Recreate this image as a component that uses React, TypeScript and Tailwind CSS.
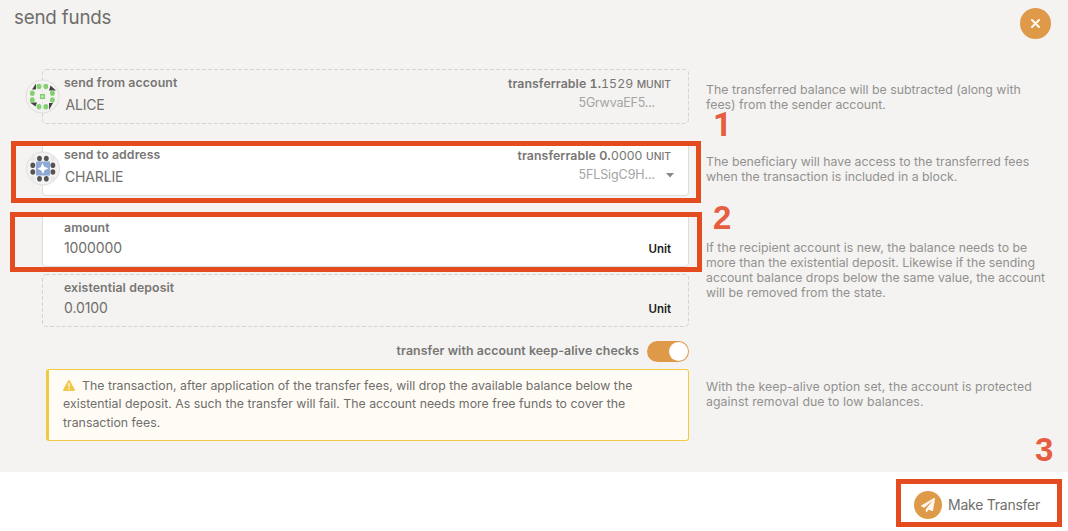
import type { ReactNode } from "react";

function Help({ children, className = "" }: { children: ReactNode; className?: string }) {
  return (
    <p className={`w-[350px] shrink-0 whitespace-pre text-[12.3px] leading-[15px] tracking-[0.01px] text-[#92918f] ${className}`}>
      {children}
    </p>
  );
}

function Callout({ n, className }: { n: string; className: string }) {
  return (
    <span className={`absolute font-bold text-[#e65d41] ${className}`}>{n}</span>
  );
}

function AliceIcon() {
  return (
    <svg className="absolute -left-[17px] top-[10px]" width="35" height="35" viewBox="0 0 35 35">
      <circle cx="17.5" cy="17.5" r="16.5" fill="#f4f3f1" fillOpacity="0.6" stroke="#dededd" />
      <path d="M11 4.500V10.500H7zM31 11.500h-7l1.500-5zM5 23.500h7l-1.500 4zM24 31v-7h4z" fill="#424242" />
      <g fill="#84cf72">
        <ellipse cx="14" cy="7.500" rx="2.400" ry="2.700" /><ellipse cx="20.800" cy="7.500" rx="2.400" ry="2.700" />
        <ellipse cx="7.300" cy="14.300" rx="2.400" ry="2.700" /><ellipse cx="27.400" cy="14.300" rx="2.400" ry="2.700" />
        <ellipse cx="7.300" cy="21" rx="2.400" ry="2.700" /><ellipse cx="27.400" cy="21" rx="2.400" ry="2.700" />
        <ellipse cx="14" cy="27.700" rx="2.400" ry="2.700" /><ellipse cx="20.800" cy="27.700" rx="2.400" ry="2.700" />
      </g>
      <rect x="15.700" y="15.700" width="3.600" height="3.600" fill="#d4edce" stroke="#84cf72" strokeWidth="1.500" />
    </svg>
  );
}

function CharlieIcon() {
  return (
    <svg className="absolute -left-[17px] top-[9px]" width="35" height="35" viewBox="0 0 35 35">
      <circle cx="17" cy="17.500" r="16.500" fill="#f4f3f1" stroke="#dededd" />
      <g transform="translate(-0.500 0)">
        <g fill="#e9e9e9">
          <circle cx="7.500" cy="7.500" r="2.600" /><circle cx="27.400" cy="7.500" r="2.600" />
          <circle cx="7.500" cy="27.500" r="2.600" /><circle cx="27.400" cy="27.500" r="2.600" />
        </g>
        <rect x="10.500" y="10.500" width="14" height="14" fill="#8fa9d6" />
        <g fill="#555">
          <ellipse cx="14" cy="7.500" rx="2.400" ry="2.800" /><ellipse cx="20.800" cy="7.500" rx="2.400" ry="2.800" />
          <ellipse cx="7.300" cy="14.300" rx="2.400" ry="2.800" /><ellipse cx="27.400" cy="14.300" rx="2.400" ry="2.800" />
          <ellipse cx="7.300" cy="21" rx="2.400" ry="2.800" /><ellipse cx="27.400" cy="21" rx="2.400" ry="2.800" />
          <ellipse cx="14" cy="27.700" rx="2.400" ry="2.800" /><ellipse cx="20.800" cy="27.700" rx="2.400" ry="2.800" />
        </g>
        <path d="M16.800 12l2 3.800 4.200 1.400-4 2L17.500 23l-2-3.700-3.700-1.500 3.700-1.800z" fill="#fff" />
      </g>
    </svg>
  );
}

function DashedFrame({ height }: { height: number }) {
  return (
    <svg className="pointer-events-none absolute inset-0" width="647" height={height}>
      <rect x="0.5" y="0.5" width="646" height={height - 1} rx="3.5" fill="none" stroke="#d5d4d2" strokeDasharray="4 2" />
    </svg>
  );
}

const label = "text-[12.3px] leading-[16px] tracking-[0.1px] font-semibold text-[#777674]";

export default function App() {
  return (
    <div className="relative flex h-[531px] w-[1068px] flex-col overflow-hidden bg-white font-['Inter',sans-serif] text-[#6f6e6c]">
      <main className="h-[472px] bg-[#f4f3f1]">
        <header className="flex h-[69px] items-start justify-between pr-[17px] pl-[14px]">
          <h1 className="pt-[6px] text-[18.8px] leading-[24px] tracking-[-0.2px]">send funds</h1>
          <button aria-label="Close" className="mt-2 flex size-[31px] items-center justify-center rounded-full bg-[#df9a49]">
            <svg width="9" height="9" viewBox="0 0 9 9">
              <path d="M1 1l7 7M8 1L1 8" stroke="#fffaf2" strokeWidth="2" strokeLinecap="round" />
            </svg>
          </button>
        </header>

        <div className="flex h-[72px] gap-[17px] pl-[42px]">
          <div className="relative flex h-[55px] w-[647px] justify-between pr-[18px] pl-[22px]">
            <DashedFrame height={55} />
            <AliceIcon />
            <div>
              <div className={`pt-[6px] ${label}`}>send from account</div>
              <div className="pt-[5px] pl-[1.500px] text-[14px] leading-[18px] tracking-[-0.2px]">ALICE</div>
            </div>
            <div className="flex flex-col items-end">
              <div className="pt-[7px] text-[12.3px] leading-[16px] tracking-[0.08px] text-[#777674] tabular-nums"><b className="font-semibold">transferrable 1.</b><span>1529</span> <span className="text-[10.3px] font-medium tracking-normal">MUNIT</span></div>
              <div className="pt-[3px] pr-[16px] text-[12.5px] leading-[16px] tracking-[-0.2px] text-[#a5a4a3]">5GrwvaEF5...</div>
            </div>
          </div>
          <Help className="pt-[13px]">{"The transferred balance will be subtracted (along with\nfees) from the sender account."}</Help>
        </div>

        <div className="flex h-[72px] gap-[17px] pl-[42px]">
          <div className="relative flex h-[55px] w-[647px] justify-between rounded border border-[#dddddc] bg-white pr-[17px] pl-[21px]">
            <CharlieIcon />
            <div>
              <div className={`pt-[5px] ${label}`}>send to address</div>
              <div className="pt-[5px] pl-[1px] text-[14px] leading-[18px] tracking-[-0.15px]">CHARLIE</div>
            </div>
            <div className="flex flex-col items-end">
              <div className="pt-[6px] text-[12.3px] leading-[16px] tracking-[0.1px] text-[#777674]"><b className="font-semibold">transferrable 0.</b><span>0000</span> <span className="text-[10.3px] font-medium tracking-normal">UNIT</span></div>
              <div className="flex items-center gap-[11px] pt-[3px] text-[12.5px] leading-[16px] tracking-[-0.1px] text-[#a5a4a3]">
                5FLSigC9H...
                <svg className="-mr-[3px]" width="8" height="5" viewBox="0 0 8 5"><path d="M0 0h8L4 4.500z" fill="#8a8987" /></svg>
              </div>
            </div>
          </div>
          <Help className="pt-[13px]">{"The beneficiary will have access to the transferred fees\nwhen the transaction is included in a block."}</Help>
        </div>

        <div className="flex h-[128px] gap-[17px] pl-[42px]">
          <div className="flex w-[647px] flex-col gap-[7px]">
            <div className="flex h-[54px] items-end justify-between rounded border border-[#dddddc] bg-white pr-[17px] pb-[9px] pl-[21px]">
              <div>
                <div className={label}>amount</div>
                <div className="pt-[3px] text-[14px] leading-[18px] tracking-[-0.1px]">1000000</div>
              </div>
              <b className="text-[11.5px] leading-[16px] font-semibold text-[#1c1c1c]">Unit</b>
            </div>
            <div className="relative flex h-[53px] items-end justify-between pr-[18px] pb-[10px] pl-[22px]">
              <DashedFrame height={53} />
              <div>
                <div className={label}>existential deposit</div>
                <div className="pt-[3px] text-[14px] leading-[18px] tracking-[-0.1px]">0.0100</div>
              </div>
              <b className="text-[11.5px] leading-[16px] font-semibold text-[#1c1c1c]">Unit</b>
            </div>
          </div>
          <Help className="pt-[27px]">{"If the recipient account is new, the balance needs to be\nmore than the existential deposit. Likewise if the sending\naccount balance drops below the same value, the account\nwill be removed from the state."}</Help>
        </div>

        <div className="flex gap-[17px] pl-[42px]">
          <div className="flex w-[647px] flex-col">
            <div className="flex h-[21px] items-center justify-end gap-[8px]">
              <span className={`pb-[2px] ${label}`}>transfer with account keep-alive checks</span>
              <span role="switch" aria-checked="true" className="flex h-[21px] w-[42px] justify-end rounded-full bg-[#df9a49] p-px">
                <span className="size-[19px] rounded-full bg-white" />
              </span>
            </div>
            <div className="mt-[7px] ml-1 h-[72px] rounded-[3px] border border-l-[3px] border-[#f1c943] bg-[#fffcf5] pt-[7px] pl-[14px] text-[12.3px] leading-[18.5px] tracking-[0.02px]">
              <div className="flex h-[18px] items-center gap-[7px]">
                <svg className="-mt-[2px]" width="12" height="11" viewBox="0 0 12 11">
                  <path d="M5.200.5q.8-1 1.600 0l5 9q.5 1.400-.8 1.500H1Q-.3 10.900.2 9.500z" fill="#efc84a" />
                  <path d="M6 3.300v3.500M6 8v1.500" stroke="#fff5cf" strokeWidth="1.500" />
                </svg>
                The transaction, after application of the transfer fees, will drop the available balance below the
              </div>
              <div>existential deposit. As such the transfer will fail. The account needs more free funds to cover the</div>
              <div>transaction fees.</div>
            </div>
          </div>
          <Help className="pt-[38px] tracking-[0.07px]">{"With the keep-alive option set, the account is protected\nagainst removal due to low balances."}</Help>
        </div>
      </main>

      <footer className="flex h-[59px] items-center justify-end pr-[28px] pt-[6px]">
        <button className="flex items-center gap-[6px]">
          <span className="flex size-7 items-center justify-center rounded-full bg-[#df9a49]">
            <svg width="14" height="14" viewBox="0 0 512 512" fill="#fff8ee">
              <path d="M476 3.200L12.500 270.600c-18.100 10.400-15.800 35.600 2.200 43.200L121 358.400l287.300-253.200c5.500-4.900 13.300 2.600 8.600 8.300L176 407v80.500c0 23.600 28.500 32.900 42.500 15.800L282 426l124.600 52.200c14.200 6 30.400-2.900 33-18.200l72-432C515 7.800 493.300-6.800 476 3.200z" />
            </svg>
          </span>
          <span className="text-[14px] leading-[20px] tracking-[-0.25px]">Make Transfer</span>
        </button>
      </footer>

      <div className="absolute left-[11px] top-[141px] h-[62px] w-[690px] border-5 border-[#e44b1f]" />
      <div className="absolute left-[10px] top-[212px] h-[60px] w-[692px] border-5 border-[#e44b1f]" />
      <div className="absolute left-[896px] top-[479px] h-[48px] w-[166px] border-5 border-[#e44b1f]" />
      <Callout n="1" className="left-[713px] top-[113px] font-['Roboto'] text-[33px] leading-[24px]" />
      <Callout n="2" className="left-[713px] top-[206px] font-['Liberation_Sans'] text-[33px] leading-[24px]" />
      <Callout n="3" className="left-[1035px] top-[438px] font-['Liberation_Sans'] text-[33px] leading-[24px]" />
    </div>
  );
}
